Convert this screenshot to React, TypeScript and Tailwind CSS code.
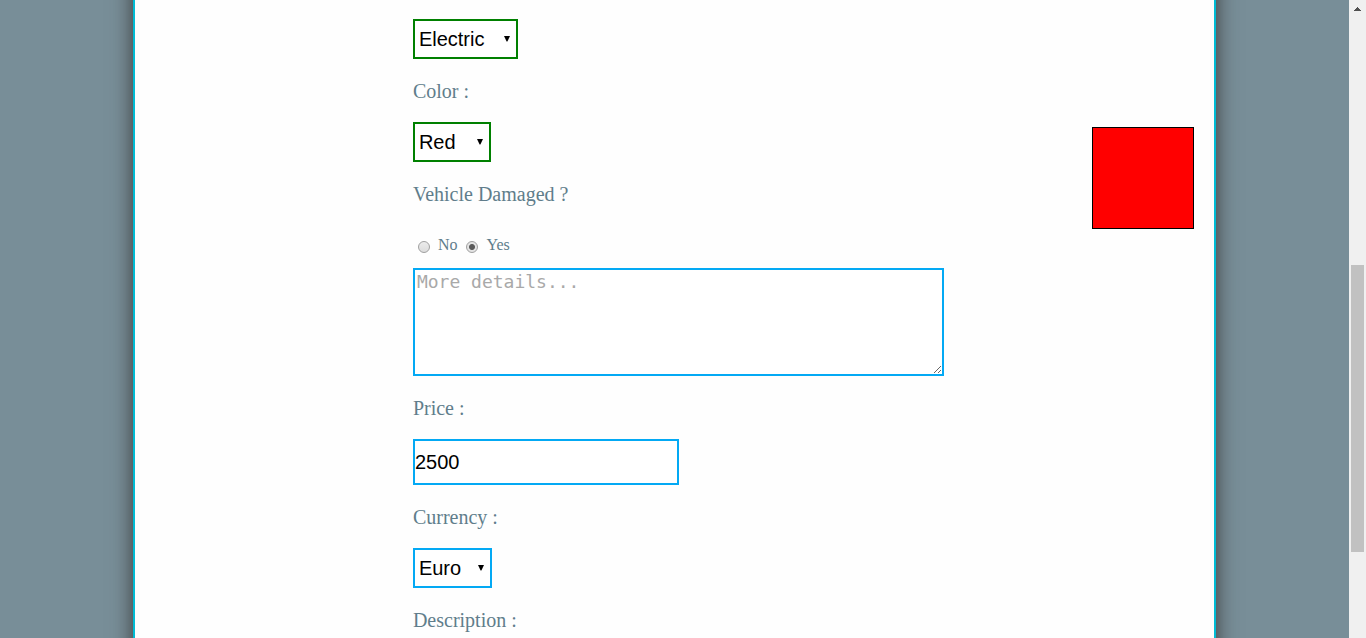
import React, { useState } from "react";

type SelectProps = {
  id: string;
  label?: string;
  value: string;
  options: string[];
  onChange: (value: string) => void;
  className: string;
};

function SelectBox({ id, label, value, options, onChange, className }: SelectProps) {
  return (
    <div className={`grid h-10 items-center ${className}`}>
      <select
        id={id}
        aria-label={label}
        value={value}
        onChange={(e) => onChange(e.target.value)}
        className="col-start-1 row-start-1 h-10 w-full appearance-none border-2 border-inherit bg-white pl-1 font-['Liberation_Sans',sans-serif] text-[20px] text-black outline-none"
      >
        {options.map((o) => (
          <option key={o}>{o}</option>
        ))}
      </select>
      <svg
        aria-hidden="true"
        viewBox="0 0 6 6"
        className="pointer-events-none col-start-1 row-start-1 mr-2 size-[6px] justify-self-end"
      >
        <path d="M0 0h6L3.4 5.5h-.8z" fill="#000" />
      </svg>
    </div>
  );
}

const labelClass = "mt-[21px] mb-[19px] block text-[20px] leading-[23px]";
const radioClass =
  "mt-1 size-3 appearance-none rounded-full border border-[#a0a0a0] bg-linear-to-b from-[#ececec] to-[#dcdcdc] checked:bg-[radial-gradient(circle,#5a5a5a_0,#5a5a5a_2.5px,#e4e4e4_3.5px)]";

export default function App() {
  const [fuel, setFuel] = useState("Electric");
  const [color, setColor] = useState("Red");
  const [currency, setCurrency] = useState("Euro");
  const [damaged, setDamaged] = useState(true);
  const [price, setPrice] = useState("2500");

  return (
    <div className="flex min-h-screen bg-[#788e98] font-['Liberation_Serif',serif] text-[#607d8b]">
      <div className="flex flex-1 justify-center overflow-hidden">
        <main className="-my-6 box-content flex w-4/5 items-start border-x-2 border-[#00bcd4] bg-[#fefefe] py-6 shadow-[0_0_20px_#3a3a3a]">
          <form className="w-[809px] pt-[19px] pl-[278px]">
            <SelectBox
              id="fuel"
              label="Fuel"
              value={fuel}
              options={["Electric", "Petrol", "Diesel"]}
              onChange={setFuel}
              className="w-[105px] border-[#008000]"
            />

            <label htmlFor="color" className={labelClass}>Color :</label>
            <SelectBox
              id="color"
              value={color}
              options={["Red", "Blue", "Black"]}
              onChange={setColor}
              className="w-[78px] border-[#008000]"
            />

            <div role="radiogroup" aria-labelledby="damaged-label">
              <p id="damaged-label" className={labelClass}>Vehicle Damaged ?</p>
              <div className="flex h-[43px] items-center gap-[9px] pb-1 pl-[5px] text-[16px] leading-5">
                <label className="flex items-center gap-2">
                  <input
                    type="radio"
                    name="damaged"
                    checked={!damaged}
                    onChange={() => setDamaged(false)}
                    className={radioClass}
                  />
                  No
                </label>
                <label className="flex items-center gap-2">
                  <input
                    type="radio"
                    name="damaged"
                    checked={damaged}
                    onChange={() => setDamaged(true)}
                    className={radioClass}
                  />
                  Yes
                </label>
              </div>
            </div>

            <textarea
              aria-label="More details"
              placeholder="More details..."
              className="block h-[108px] w-full border-2 border-[#03a9f4] bg-white px-[2px] font-['DejaVu_Sans_Mono',monospace] text-[18px] leading-[23px] text-black outline-none placeholder:text-[#a9a9a9]"
            />

            <label htmlFor="price" className={labelClass}>Price :</label>
            <input
              id="price"
              type="text"
              value={price}
              onChange={(e) => setPrice(e.target.value)}
              className="block h-[46px] w-[266px] border-2 border-[#03a9f4] bg-white font-['Liberation_Sans',sans-serif] text-[20px] text-black outline-none"
            />

            <label htmlFor="currency" className={labelClass}>Currency :</label>
            <SelectBox
              id="currency"
              value={currency}
              options={["Euro", "Dollar", "Pound"]}
              onChange={setCurrency}
              className="w-[79px] border-[#03a9f4]"
            />

            <p className="mt-[21px] text-[20px] leading-[23px]">Description :</p>
          </form>

          <div className="mt-[127px] mr-5 ml-auto size-[102px] shrink-0 border border-black bg-[#ff0000]" />
        </main>
      </div>

      <div aria-hidden="true" className="flex w-[17px] shrink-0 flex-col items-center bg-[#f0f0f0]">
        <svg viewBox="0 0 7 4" className="mt-[7px] h-1 w-[7px] shrink-0" shapeRendering="crispEdges">
          <path d="M3 0h1v1h1v1h1v1h1v1H0V3h1V2h1V1h1z" fill="#505050" />
        </svg>
        <div className="mt-[254px] h-[45%] w-[13px] bg-[#c1c1c1]" />
      </div>
    </div>
  );
}
